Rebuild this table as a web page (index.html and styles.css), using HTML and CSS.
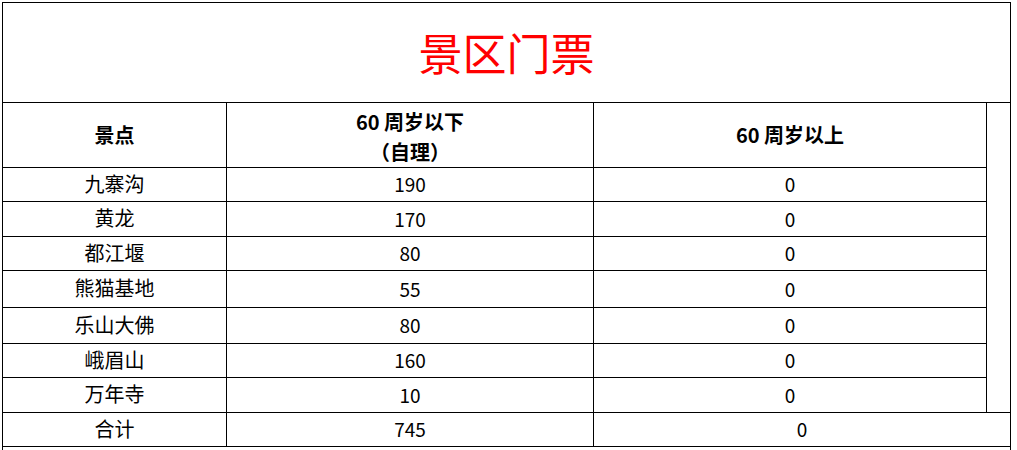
FILE: index.html
```html
<!DOCTYPE html>
<html lang="zh-CN">
<head>
<meta charset="utf-8">
<title>景区门票</title>
<link rel="stylesheet" href="styles.css">
</head>
<body>
<div class="sheet">
  <div class="cell title">景区门票</div>

  <div class="cell head">景点</div>
  <div class="cell head two"><span>60 周岁以下</span><span>（自理）</span></div>
  <div class="cell head">60 周岁以上</div>
  <div class="cell side"></div>

  <div class="cell name">九寨沟</div><div class="cell num">190</div><div class="cell num">0</div>
  <div class="cell name">黄龙</div><div class="cell num">170</div><div class="cell num">0</div>
  <div class="cell name">都江堰</div><div class="cell num">80</div><div class="cell num">0</div>
  <div class="cell name">熊猫基地</div><div class="cell num">55</div><div class="cell num">0</div>
  <div class="cell name">乐山大佛</div><div class="cell num">80</div><div class="cell num">0</div>
  <div class="cell name">峨眉山</div><div class="cell num">160</div><div class="cell num">0</div>
  <div class="cell name">万年寺</div><div class="cell num">10</div><div class="cell num">0</div>

  <div class="cell name">合计</div><div class="cell num">745</div><div class="cell num wide">0</div>

  <div class="cell foot"></div>
</div>
</body>
</html>
```

FILE: styles.css
```css
html, body {
  margin: 0;
  padding: 0;
  background: #fff;
}

body {
  padding: 2px 0 0 2px;
  font-family: "Noto Sans CJK SC", "Noto Sans", sans-serif;
  font-size: 20px;
  color: #000;
}

.sheet {
  display: grid;
  width: 1009px;
  box-sizing: border-box;
  grid-template-columns: 224px 367px 393px 24px;
  grid-template-rows: 100px 65px 34px 35px 34px 37px 36px 34px 35px 34px 3px;
  border-top: 1px solid #000;
  border-left: 1px solid #000;
}

.cell {
  box-sizing: border-box;
  border-right: 1px solid #000;
  border-bottom: 1px solid #000;
  display: flex;
  align-items: center;
  justify-content: center;
  line-height: 1;
  white-space: nowrap;
}

.name,
.num {
  padding-bottom: 2px;
}

.num {
  font-size: 19px;
}

.title {
  grid-column: 1 / span 4;
  color: #ff0000;
  font-size: 44px;
  padding-bottom: 1px;
}

.head {
  font-weight: 700;
}

.two {
  flex-direction: column;
  line-height: 30px;
  padding-top: 4px;
}

.side {
  grid-column: 4;
  grid-row: 2 / span 8;
}

.wide {
  grid-column: 3 / span 2;
}

.foot {
  grid-column: 1 / span 4;
  border-bottom: none;
}
```
